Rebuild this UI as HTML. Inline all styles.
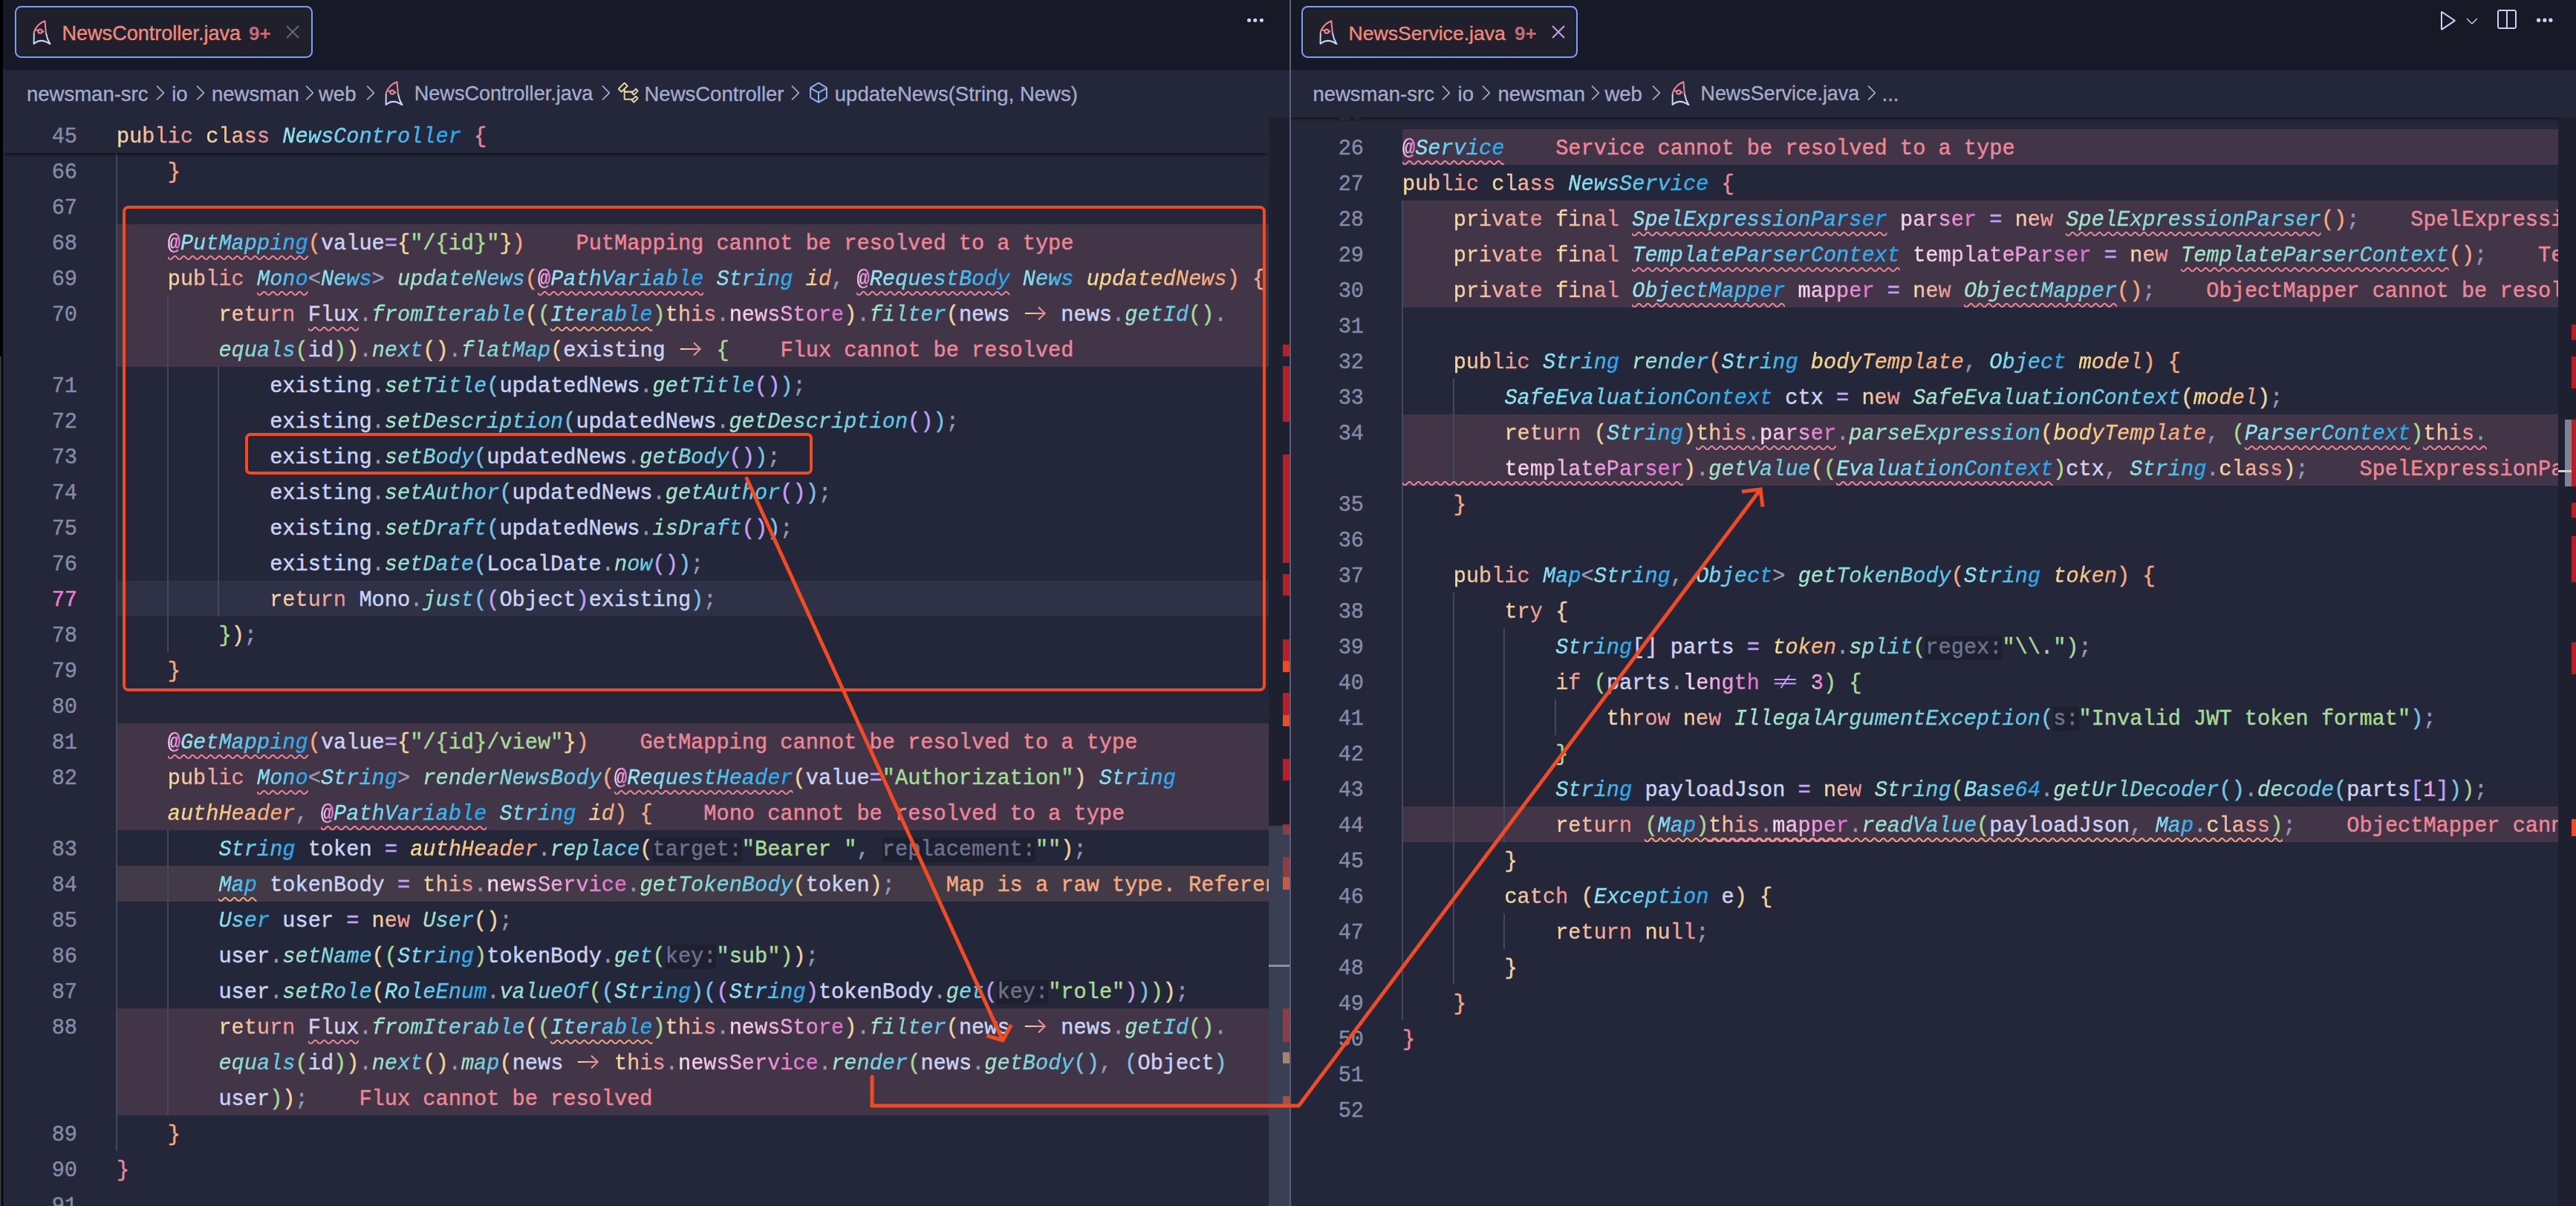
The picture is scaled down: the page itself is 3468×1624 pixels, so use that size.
<!DOCTYPE html><html><head><meta charset="utf-8"><style>
*{margin:0;padding:0;box-sizing:border-box}
html,body{width:3468px;height:1624px;overflow:hidden;background:#181926}
body{position:relative;font-family:"Liberation Sans",sans-serif}
.abs{position:absolute}
.pane{position:absolute;overflow:hidden;background:#24273a}
.hl{position:absolute;height:48px}
.err{background:#423548}
.warn{background:#433a47}
.cur{background:#2f3246}
.guide{position:absolute;width:2px;background:#434760}
.ln{position:absolute;height:48px;padding-top:3px;text-align:right;font:28.63px "Liberation Mono",monospace;line-height:48px;color:#868ca6;white-space:pre;-webkit-text-stroke:0.4px currentColor}
.ln.act{color:#f07fd8}
.row{position:absolute;height:48px;padding-top:3px;font:28.63px "Liberation Mono",monospace;line-height:48px;color:#cad3f5;white-space:pre;-webkit-text-stroke:0.45px currentColor}
.row span{}
.k{background:linear-gradient(90deg,#f6dca2,#ee8a90);-webkit-background-clip:text;background-clip:text;color:transparent}
.ty{font-style:italic;background:linear-gradient(90deg,#96e8f0,#22a4ee);-webkit-background-clip:text;background-clip:text;color:transparent}
.fn{font-style:italic;background:linear-gradient(90deg,#a8e6c4,#56c2ee);-webkit-background-clip:text;background-clip:text;color:transparent}
.pa{font-style:italic;background:linear-gradient(90deg,#f6de8c,#f5a078);-webkit-background-clip:text;background-clip:text;color:transparent}
.fd{background:linear-gradient(90deg,#f8dcef,#e06ccb);-webkit-background-clip:text;background-clip:text;color:transparent}
.at{background:linear-gradient(90deg,#f8d0f0,#e070d0);-webkit-background-clip:text;background-clip:text;color:transparent}
.s{color:#a6da95}
.num{background:linear-gradient(90deg,#f8d0ec,#e870c8);-webkit-background-clip:text;background-clip:text;color:transparent}
.op{color:#c6a0f6}
.pu{color:#939ab7}
.arr{display:inline-block;width:34.36px;text-align:center;color:#f5a97f}
.neq{display:inline-block;width:34.36px;text-align:center;color:#c6a0f6}
.hint{color:#6e738d;background:#1e2030}
.me{color:#ed8796}
.mw{color:#f5a97f}
.sq{position:absolute;display:block}
.sticky{position:absolute;height:48px;background:#24273a;box-shadow:0 5px 4px -3px rgba(10,10,18,.85)}
.tabbar{position:absolute;top:0;height:94px;background:#181926}
.tab{position:absolute;top:8px;height:70px;border:2px solid #7c9ff5;border-radius:8.5px;background:#201f2c}
.tt{position:absolute;font-size:27.05px;line-height:27px;white-space:pre;-webkit-text-stroke:0.35px currentColor}
.bc{position:absolute;font-size:27.5px;line-height:27px;color:#a5adcb;white-space:pre;-webkit-text-stroke:0.3px currentColor}
</style></head><body>
<svg width="0" height="0" style="position:absolute"><defs><pattern id="sqr" patternUnits="userSpaceOnUse" width="12" height="6"><g fill="#ee8a98"><polygon points="11,0 5,6 2.2,6 8.2,0"/><polygon points="8,0 12,4 12,1.2 10.8,0"/><polygon points="0,4 2,6 4.8,6 0,1.2"/></g></pattern><pattern id="sqy" patternUnits="userSpaceOnUse" width="12" height="6"><g fill="#f5a97f"><polygon points="11,0 5,6 2.2,6 8.2,0"/><polygon points="8,0 12,4 12,1.2 10.8,0"/><polygon points="0,4 2,6 4.8,6 0,1.2"/></g></pattern></defs></svg>
<div class="abs" style="left:0;top:0;width:4px;height:1624px;background:#000"></div>
<div class="abs" style="left:0;top:480px;width:2px;height:1144px;background:#343438"></div>
<div class="tabbar" style="left:4px;width:1732px"></div>
<div class="tabbar" style="left:1738px;width:1730px"></div>
<div class="abs" style="left:4px;top:94px;width:1732px;height:64px;background:#24273a"></div>
<div class="abs" style="left:1738px;top:94px;width:1730px;height:64px;background:#24273a"></div>
<div class="tab" style="left:20px;width:401px"></div>
<svg class="abs" style="left:43.0px;top:26.0px" width="26" height="34" viewBox="-1 -1 26 34"><defs><clipPath id="jta"><rect x="-2" y="-2" width="30" height="19.3"/></clipPath><clipPath id="jba"><rect x="-2" y="17.3" width="30" height="20"/></clipPath></defs><g fill="none" stroke-width="2" stroke-linejoin="round"><g clip-path="url(#jta)" stroke="#ed8796"><path d="M16.4 1.3 C9.5 4 4 9.5 1.8 16.4 L1.6 32 C8 26.5 16 26.8 23.6 32.6 C20.5 27.5 18.8 22.5 17.9 17.5 Z"/><path d="M4.3 13.2 L7.6 14.4 M12.6 15.6 L15.4 15.6"/></g><circle cx="10" cy="15.2" r="2.6" stroke="#ed8796"/><g clip-path="url(#jba)" stroke="#cad3f5"><path d="M16.4 1.3 C9.5 4 4 9.5 1.8 16.4 L1.6 32 C8 26.5 16 26.8 23.6 32.6 C20.5 27.5 18.8 22.5 17.9 17.5 Z"/></g></g></svg>
<div class="tt" style="left:83.5px;top:32px;color:#f08a7c">NewsController.java</div>
<div class="tt" style="left:335px;top:32px;color:#c46e72;font-weight:bold;font-size:26px;-webkit-text-stroke:0">9+</div>
<svg class="abs" style="left:377.70px;top:27.40px" width="32.00" height="32.00" viewBox="0 0 16 16"><path d="M8 8.707l3.646 3.647.708-.707L8.707 8l3.647-3.646-.707-.708L8 7.293 4.354 3.646l-.707.708L7.293 8l-3.646 3.646.707.708L8 8.707z" fill="#67637d" fill-rule="evenodd" clip-rule="evenodd"/></svg>
<div class="tab" style="left:1752px;width:372px"></div>
<svg class="abs" style="left:1775.0px;top:26.0px" width="26" height="34" viewBox="-1 -1 26 34"><defs><clipPath id="jtb"><rect x="-2" y="-2" width="30" height="19.3"/></clipPath><clipPath id="jbb"><rect x="-2" y="17.3" width="30" height="20"/></clipPath></defs><g fill="none" stroke-width="2" stroke-linejoin="round"><g clip-path="url(#jtb)" stroke="#ed8796"><path d="M16.4 1.3 C9.5 4 4 9.5 1.8 16.4 L1.6 32 C8 26.5 16 26.8 23.6 32.6 C20.5 27.5 18.8 22.5 17.9 17.5 Z"/><path d="M4.3 13.2 L7.6 14.4 M12.6 15.6 L15.4 15.6"/></g><circle cx="10" cy="15.2" r="2.6" stroke="#ed8796"/><g clip-path="url(#jbb)" stroke="#cad3f5"><path d="M16.4 1.3 C9.5 4 4 9.5 1.8 16.4 L1.6 32 C8 26.5 16 26.8 23.6 32.6 C20.5 27.5 18.8 22.5 17.9 17.5 Z"/></g></g></svg>
<div class="tt" style="left:1815.5px;top:32px;color:#f08a7c;font-size:26.6px">NewsService.java</div>
<div class="tt" style="left:2039px;top:32px;color:#c46e72;font-weight:bold;font-size:26px;-webkit-text-stroke:0">9+</div>
<svg class="abs" style="left:2081.70px;top:26.50px" width="32.00" height="32.00" viewBox="0 0 16 16"><path d="M8 8.707l3.646 3.647.708-.707L8.707 8l3.647-3.646-.707-.708L8 7.293 4.354 3.646l-.707.708L7.293 8l-3.646 3.646.707.708L8 8.707z" fill="#c6a0f6" fill-rule="evenodd" clip-rule="evenodd"/></svg>
<svg class="abs" style="left:1670px;top:17px" width="40" height="20"><circle cx="11.6" cy="10.3" r="2.55" fill="#cad3f5"/><circle cx="19.8" cy="10.3" r="2.55" fill="#cad3f5"/><circle cx="28.4" cy="10.3" r="2.55" fill="#cad3f5"/></svg>
<svg class="abs" style="left:3406px;top:17px" width="40" height="20"><circle cx="11.6" cy="10.2" r="2.6" fill="#cad3f5"/><circle cx="19.9" cy="10.2" r="2.6" fill="#cad3f5"/><circle cx="27.9" cy="10.2" r="2.6" fill="#cad3f5"/></svg>
<svg class="abs" style="left:3279.60px;top:11.00px" width="32.00" height="32.00" viewBox="0 0 16 16"><path d="M3.78 2L3 2.41v12l.78.42 9-6V8l-9-6zM4 13.48V3.35l7.6 5.07L4 13.48z" fill="#cad3f5" fill-rule="evenodd" clip-rule="evenodd"/></svg>
<svg class="abs" style="left:3315.50px;top:15.90px" width="24.00" height="24.00" viewBox="0 0 16 16"><path d="M7.976 10.072l4.357-4.357.62.618L8.284 11h-.618L3 6.333l.619-.618 4.357 4.357z" fill="#cad3f5" fill-rule="evenodd" clip-rule="evenodd"/></svg>
<svg class="abs" style="left:3358.00px;top:11.00px" width="32.00" height="32.00" viewBox="0 0 16 16"><path d="M14 1H3L2 2v11l1 1h11l1-1V2l-1-1zM8 13H3V2h5v11zm6 0H9V2h5v11z" fill="#cad3f5" fill-rule="evenodd" clip-rule="evenodd"/></svg>
<div class="bc" style="left:36.0px;top:112.5px">newsman-src</div>
<svg class="abs" style="left:199.07px;top:109.21px" width="32.00" height="32.00" viewBox="0 0 16 16"><path d="M10.072 8.024L5.715 3.667l.618-.62L11 7.716v.618L6.333 13l-.618-.619 4.357-4.357z" fill="#a5adcb" fill-rule="evenodd" clip-rule="evenodd"/></svg>
<div class="bc" style="left:231.2px;top:112.5px">io</div>
<svg class="abs" style="left:252.57px;top:109.21px" width="32.00" height="32.00" viewBox="0 0 16 16"><path d="M10.072 8.024L5.715 3.667l.618-.62L11 7.716v.618L6.333 13l-.618-.619 4.357-4.357z" fill="#a5adcb" fill-rule="evenodd" clip-rule="evenodd"/></svg>
<div class="bc" style="left:285.0px;top:112.5px">newsman</div>
<svg class="abs" style="left:399.57px;top:109.21px" width="32.00" height="32.00" viewBox="0 0 16 16"><path d="M10.072 8.024L5.715 3.667l.618-.62L11 7.716v.618L6.333 13l-.618-.619 4.357-4.357z" fill="#a5adcb" fill-rule="evenodd" clip-rule="evenodd"/></svg>
<div class="bc" style="left:429.0px;top:112.5px">web</div>
<svg class="abs" style="left:481.57px;top:109.21px" width="32.00" height="32.00" viewBox="0 0 16 16"><path d="M10.072 8.024L5.715 3.667l.618-.62L11 7.716v.618L6.333 13l-.618-.619 4.357-4.357z" fill="#a5adcb" fill-rule="evenodd" clip-rule="evenodd"/></svg>
<div class="bc" style="left:1767.4px;top:112.5px">newsman-src</div>
<svg class="abs" style="left:1930.47px;top:109.21px" width="32.00" height="32.00" viewBox="0 0 16 16"><path d="M10.072 8.024L5.715 3.667l.618-.62L11 7.716v.618L6.333 13l-.618-.619 4.357-4.357z" fill="#a5adcb" fill-rule="evenodd" clip-rule="evenodd"/></svg>
<div class="bc" style="left:1962.6px;top:112.5px">io</div>
<svg class="abs" style="left:1983.97px;top:109.21px" width="32.00" height="32.00" viewBox="0 0 16 16"><path d="M10.072 8.024L5.715 3.667l.618-.62L11 7.716v.618L6.333 13l-.618-.619 4.357-4.357z" fill="#a5adcb" fill-rule="evenodd" clip-rule="evenodd"/></svg>
<div class="bc" style="left:2016.4px;top:112.5px">newsman</div>
<svg class="abs" style="left:2130.97px;top:109.21px" width="32.00" height="32.00" viewBox="0 0 16 16"><path d="M10.072 8.024L5.715 3.667l.618-.62L11 7.716v.618L6.333 13l-.618-.619 4.357-4.357z" fill="#a5adcb" fill-rule="evenodd" clip-rule="evenodd"/></svg>
<div class="bc" style="left:2160.4px;top:112.5px">web</div>
<svg class="abs" style="left:2212.97px;top:109.21px" width="32.00" height="32.00" viewBox="0 0 16 16"><path d="M10.072 8.024L5.715 3.667l.618-.62L11 7.716v.618L6.333 13l-.618-.619 4.357-4.357z" fill="#a5adcb" fill-rule="evenodd" clip-rule="evenodd"/></svg>
<svg class="abs" style="left:516.6px;top:108.0px" width="26" height="34" viewBox="-1 -1 26 34"><defs><clipPath id="jtc"><rect x="-2" y="-2" width="30" height="19.3"/></clipPath><clipPath id="jbc"><rect x="-2" y="17.3" width="30" height="20"/></clipPath></defs><g fill="none" stroke-width="2" stroke-linejoin="round"><g clip-path="url(#jtc)" stroke="#ed8796"><path d="M16.4 1.3 C9.5 4 4 9.5 1.8 16.4 L1.6 32 C8 26.5 16 26.8 23.6 32.6 C20.5 27.5 18.8 22.5 17.9 17.5 Z"/><path d="M4.3 13.2 L7.6 14.4 M12.6 15.6 L15.4 15.6"/></g><circle cx="10" cy="15.2" r="2.6" stroke="#ed8796"/><g clip-path="url(#jbc)" stroke="#cad3f5"><path d="M16.4 1.3 C9.5 4 4 9.5 1.8 16.4 L1.6 32 C8 26.5 16 26.8 23.6 32.6 C20.5 27.5 18.8 22.5 17.9 17.5 Z"/></g></g></svg>
<div class="bc" style="left:557.8px;top:112.5px;font-size:27.05px">NewsController.java</div>
<svg class="abs" style="left:798.57px;top:109.21px" width="32.00" height="32.00" viewBox="0 0 16 16"><path d="M10.072 8.024L5.715 3.667l.618-.62L11 7.716v.618L6.333 13l-.618-.619 4.357-4.357z" fill="#a5adcb" fill-rule="evenodd" clip-rule="evenodd"/></svg>
<svg class="abs" style="left:830.30px;top:109.40px" width="32.00" height="32.00" viewBox="0 0 16 16"><path d="M11.34 9.71h.71l2.67-2.67v-.71L13.38 5h-.7l-1.82 1.81h-5V5.56l1.86-1.85V3l-2-2H5L1 5v.71l2 2h.71l1.14-1.15v5.79l.5.5H10v.52l1.33 1.34h.71l2.67-2.67v-.71L13.37 10h-.7l-1.86 1.85h-5v-4H10v.48l1.34 1.38zm1.69-3.65l.63.63-2 2-.63-.63 2-2zm0 5l.63.63-2 2-.63-.63 2-2zM3.35 6.65L2.06 5.36l3.29-3.3 1.3 1.3-3.3 3.29z" fill="#eed49f" fill-rule="evenodd" clip-rule="evenodd"/></svg>
<div class="bc" style="left:867.5px;top:112.5px">NewsController</div>
<svg class="abs" style="left:1054.07px;top:109.21px" width="32.00" height="32.00" viewBox="0 0 16 16"><path d="M10.072 8.024L5.715 3.667l.618-.62L11 7.716v.618L6.333 13l-.618-.619 4.357-4.357z" fill="#a5adcb" fill-rule="evenodd" clip-rule="evenodd"/></svg>
<svg class="abs" style="left:1086.40px;top:108.80px" width="32.00" height="32.00" viewBox="0 0 16 16"><path d="M13.51 4l-5-3h-1l-5 3-.49.86v6l.49.85 5 3h1l5-3 .49-.85v-6L13.51 4zm-6 9.56l-4.5-2.7V5.7l4.5 2.45v5.41zM3.27 4.7l4.74-2.84 4.74 2.84-4.74 2.59L3.27 4.7zM13 10.86l-4.5 2.7V8.15L13 5.7v5.16z" fill="#8aadf4" fill-rule="evenodd" clip-rule="evenodd"/></svg>
<div class="bc" style="left:1123.8px;top:112.5px">updateNews(String, News)</div>
<svg class="abs" style="left:2249.0px;top:108.0px" width="26" height="34" viewBox="-1 -1 26 34"><defs><clipPath id="jtd"><rect x="-2" y="-2" width="30" height="19.3"/></clipPath><clipPath id="jbd"><rect x="-2" y="17.3" width="30" height="20"/></clipPath></defs><g fill="none" stroke-width="2" stroke-linejoin="round"><g clip-path="url(#jtd)" stroke="#ed8796"><path d="M16.4 1.3 C9.5 4 4 9.5 1.8 16.4 L1.6 32 C8 26.5 16 26.8 23.6 32.6 C20.5 27.5 18.8 22.5 17.9 17.5 Z"/><path d="M4.3 13.2 L7.6 14.4 M12.6 15.6 L15.4 15.6"/></g><circle cx="10" cy="15.2" r="2.6" stroke="#ed8796"/><g clip-path="url(#jbd)" stroke="#cad3f5"><path d="M16.4 1.3 C9.5 4 4 9.5 1.8 16.4 L1.6 32 C8 26.5 16 26.8 23.6 32.6 C20.5 27.5 18.8 22.5 17.9 17.5 Z"/></g></g></svg>
<div class="bc" style="left:2289.5px;top:112.5px;font-size:26.9px">NewsService.java</div>
<svg class="abs" style="left:2502.57px;top:109.21px" width="32.00" height="32.00" viewBox="0 0 16 16"><path d="M10.072 8.024L5.715 3.667l.618-.62L11 7.716v.618L6.333 13l-.618-.619 4.357-4.357z" fill="#a5adcb" fill-rule="evenodd" clip-rule="evenodd"/></svg>
<div class="bc" style="left:2533.5px;top:112.5px">...</div>
<div class="pane" style="left:4px;top:158px;width:1704px;height:1466px">
<div class="hl err" style="left:153.00px;top:144.00px;width:1551.00px"></div>
<div class="hl err" style="left:153.00px;top:192.00px;width:1551.00px"></div>
<div class="hl err" style="left:153.00px;top:240.00px;width:1551.00px"></div>
<div class="hl err" style="left:153.00px;top:288.00px;width:1551.00px"></div>
<div class="hl cur" style="left:153.00px;top:624.00px;width:1551.00px"></div>
<div class="hl err" style="left:153.00px;top:816.00px;width:1551.00px"></div>
<div class="hl err" style="left:153.00px;top:864.00px;width:1551.00px"></div>
<div class="hl err" style="left:153.00px;top:912.00px;width:1551.00px"></div>
<div class="hl warn" style="left:153.00px;top:1008.00px;width:1551.00px"></div>
<div class="hl err" style="left:153.00px;top:1200.00px;width:1551.00px"></div>
<div class="hl err" style="left:153.00px;top:1248.00px;width:1551.00px"></div>
<div class="hl err" style="left:153.00px;top:1296.00px;width:1551.00px"></div>
<div class="guide" style="left:152.00px;top:48.00px;height:1344px"></div>
<div class="guide" style="left:220.72px;top:240.00px;height:480px"></div>
<div class="guide" style="left:289.44px;top:336.00px;height:336px"></div>
<div class="guide" style="left:220.72px;top:960.00px;height:384px"></div>
<div class="ln" style="left:0;width:100.00px;top:48.00px">66</div>
<div class="row" style="left:153.00px;top:48.00px">    <span style="color:#f5a97f">}</span></div>
<div class="ln" style="left:0;width:100.00px;top:96.00px">67</div>
<div class="row" style="left:153.00px;top:96.00px"></div>
<div class="ln" style="left:0;width:100.00px;top:144.00px">68</div>
<div class="row" style="left:153.00px;top:144.00px">    <span class="at">@</span><span class="ty">PutMapping</span><span style="color:#f5a97f">(</span>value<span class="op">=</span><span style="color:#eed49f">{</span><span class="s">"/{id}"</span><span style="color:#eed49f">}</span><span style="color:#f5a97f">)</span>    <span class="me">PutMapping cannot be resolved to a type</span></div>
<div class="ln" style="left:0;width:100.00px;top:192.00px">69</div>
<div class="row" style="left:153.00px;top:192.00px">    <span class="k">public</span> <span class="ty">Mono</span><span class="pu">&lt;</span><span class="ty">News</span><span class="pu">&gt;</span> <span class="fn">updateNews</span><span style="color:#f5a97f">(</span><span class="at">@</span><span class="ty">PathVariable</span> <span class="ty">String</span> <span class="pa">id</span><span class="pu">,</span> <span class="at">@</span><span class="ty">RequestBody</span> <span class="ty">News</span> <span class="pa">updatedNews</span><span style="color:#f5a97f">)</span> <span style="color:#f5a97f">{</span></div>
<div class="ln" style="left:0;width:100.00px;top:240.00px">70</div>
<div class="row" style="left:153.00px;top:240.00px">        <span class="k">return</span> Flux<span class="pu">.</span><span class="fn">fromIterable</span><span style="color:#eed49f">(</span><span style="color:#a6da95">(</span><span class="ty">Iterable</span><span style="color:#a6da95">)</span><span class="k">this</span><span class="pu">.</span><span class="fd">newsStore</span><span style="color:#eed49f">)</span><span class="pu">.</span><span class="fn">filter</span><span style="color:#eed49f">(</span>news    news<span class="pu">.</span><span class="fn">getId</span><span style="color:#a6da95">(</span><span style="color:#a6da95">)</span><span class="pu">.</span></div>
<svg class="sq" style="left:1372.78px;top:254.00px" width="35" height="20"><defs><linearGradient id="ag5_71"><stop offset="0" stop-color="#f6dca2"/><stop offset="1" stop-color="#ee8a90"/></linearGradient></defs><path d="M2.9 10 H29.8 M21 1.5 L29.8 10 L21 18.5" fill="none" stroke="url(#ag5_71)" stroke-width="1.9"/></svg>
<div class="row" style="left:153.00px;top:288.00px">        <span class="fn">equals</span><span style="color:#a6da95">(</span>id<span style="color:#a6da95">)</span><span style="color:#eed49f">)</span><span class="pu">.</span><span class="fn">next</span><span style="color:#eed49f">(</span><span style="color:#eed49f">)</span><span class="pu">.</span><span class="fn">flatMap</span><span style="color:#eed49f">(</span>existing    <span style="color:#a6da95">{</span>    <span class="me">Flux cannot be resolved</span></div>
<svg class="sq" style="left:908.92px;top:302.00px" width="35" height="20"><defs><linearGradient id="ag6_44"><stop offset="0" stop-color="#f6dca2"/><stop offset="1" stop-color="#ee8a90"/></linearGradient></defs><path d="M2.9 10 H29.8 M21 1.5 L29.8 10 L21 18.5" fill="none" stroke="url(#ag6_44)" stroke-width="1.9"/></svg>
<div class="ln" style="left:0;width:100.00px;top:336.00px">71</div>
<div class="row" style="left:153.00px;top:336.00px">            existing<span class="pu">.</span><span class="fn">setTitle</span><span style="color:#7dc4e4">(</span>updatedNews<span class="pu">.</span><span class="fn">getTitle</span><span style="color:#c6a0f6">(</span><span style="color:#c6a0f6">)</span><span style="color:#7dc4e4">)</span><span class="pu">;</span></div>
<div class="ln" style="left:0;width:100.00px;top:384.00px">72</div>
<div class="row" style="left:153.00px;top:384.00px">            existing<span class="pu">.</span><span class="fn">setDescription</span><span style="color:#7dc4e4">(</span>updatedNews<span class="pu">.</span><span class="fn">getDescription</span><span style="color:#c6a0f6">(</span><span style="color:#c6a0f6">)</span><span style="color:#7dc4e4">)</span><span class="pu">;</span></div>
<div class="ln" style="left:0;width:100.00px;top:432.00px">73</div>
<div class="row" style="left:153.00px;top:432.00px">            existing<span class="pu">.</span><span class="fn">setBody</span><span style="color:#7dc4e4">(</span>updatedNews<span class="pu">.</span><span class="fn">getBody</span><span style="color:#c6a0f6">(</span><span style="color:#c6a0f6">)</span><span style="color:#7dc4e4">)</span><span class="pu">;</span></div>
<div class="ln" style="left:0;width:100.00px;top:480.00px">74</div>
<div class="row" style="left:153.00px;top:480.00px">            existing<span class="pu">.</span><span class="fn">setAuthor</span><span style="color:#7dc4e4">(</span>updatedNews<span class="pu">.</span><span class="fn">getAuthor</span><span style="color:#c6a0f6">(</span><span style="color:#c6a0f6">)</span><span style="color:#7dc4e4">)</span><span class="pu">;</span></div>
<div class="ln" style="left:0;width:100.00px;top:528.00px">75</div>
<div class="row" style="left:153.00px;top:528.00px">            existing<span class="pu">.</span><span class="fn">setDraft</span><span style="color:#7dc4e4">(</span>updatedNews<span class="pu">.</span><span class="fn">isDraft</span><span style="color:#c6a0f6">(</span><span style="color:#c6a0f6">)</span><span style="color:#7dc4e4">)</span><span class="pu">;</span></div>
<div class="ln" style="left:0;width:100.00px;top:576.00px">76</div>
<div class="row" style="left:153.00px;top:576.00px">            existing<span class="pu">.</span><span class="fn">setDate</span><span style="color:#7dc4e4">(</span>LocalDate<span class="pu">.</span><span class="fn">now</span><span style="color:#c6a0f6">(</span><span style="color:#c6a0f6">)</span><span style="color:#7dc4e4">)</span><span class="pu">;</span></div>
<div class="ln act" style="left:0;width:100.00px;top:624.00px">77</div>
<div class="row" style="left:153.00px;top:624.00px">            <span class="k">return</span> Mono<span class="pu">.</span><span class="fn">just</span><span style="color:#7dc4e4">(</span><span style="color:#c6a0f6">(</span>Object<span style="color:#c6a0f6">)</span>existing<span style="color:#7dc4e4">)</span><span class="pu">;</span></div>
<div class="ln" style="left:0;width:100.00px;top:672.00px">78</div>
<div class="row" style="left:153.00px;top:672.00px">        <span style="color:#a6da95">}</span><span style="color:#eed49f">)</span><span class="pu">;</span></div>
<div class="ln" style="left:0;width:100.00px;top:720.00px">79</div>
<div class="row" style="left:153.00px;top:720.00px">    <span style="color:#f5a97f">}</span></div>
<div class="ln" style="left:0;width:100.00px;top:768.00px">80</div>
<div class="row" style="left:153.00px;top:768.00px"></div>
<div class="ln" style="left:0;width:100.00px;top:816.00px">81</div>
<div class="row" style="left:153.00px;top:816.00px">    <span class="at">@</span><span class="ty">GetMapping</span><span style="color:#f5a97f">(</span>value<span class="op">=</span><span style="color:#eed49f">{</span><span class="s">"/{id}/view"</span><span style="color:#eed49f">}</span><span style="color:#f5a97f">)</span>    <span class="me">GetMapping cannot be resolved to a type</span></div>
<div class="ln" style="left:0;width:100.00px;top:864.00px">82</div>
<div class="row" style="left:153.00px;top:864.00px">    <span class="k">public</span> <span class="ty">Mono</span><span class="pu">&lt;</span><span class="ty">String</span><span class="pu">&gt;</span> <span class="fn">renderNewsBody</span><span style="color:#f5a97f">(</span><span class="at">@</span><span class="ty">RequestHeader</span><span style="color:#eed49f">(</span>value<span class="op">=</span><span class="s">"Authorization"</span><span style="color:#eed49f">)</span> <span class="ty">String</span></div>
<div class="row" style="left:153.00px;top:912.00px">    <span class="pa">authHeader</span><span class="pu">,</span> <span class="at">@</span><span class="ty">PathVariable</span> <span class="ty">String</span> <span class="pa">id</span><span style="color:#f5a97f">)</span> <span style="color:#f5a97f">{</span>    <span class="me">Mono cannot be resolved to a type</span></div>
<div class="ln" style="left:0;width:100.00px;top:960.00px">83</div>
<div class="row" style="left:153.00px;top:960.00px">        <span class="ty">String</span> token <span class="op">=</span> <span class="pa">authHeader</span><span class="pu">.</span><span class="fn">replace</span><span style="color:#eed49f">(</span><span class="hint">target:</span><span class="s">"Bearer "</span><span class="pu">,</span> <span class="hint">replacement:</span><span class="s">""</span><span style="color:#eed49f">)</span><span class="pu">;</span></div>
<div class="ln" style="left:0;width:100.00px;top:1008.00px">84</div>
<div class="row" style="left:153.00px;top:1008.00px">        <span class="ty">Map</span> tokenBody <span class="op">=</span> <span class="k">this</span><span class="pu">.</span><span class="fd">newsService</span><span class="pu">.</span><span class="fn">getTokenBody</span><span style="color:#eed49f">(</span>token<span style="color:#eed49f">)</span><span class="pu">;</span>    <span class="mw">Map is a raw type. References to generic type Map&lt;K,V&gt; should be parameterized</span></div>
<div class="ln" style="left:0;width:100.00px;top:1056.00px">85</div>
<div class="row" style="left:153.00px;top:1056.00px">        <span class="ty">User</span> user <span class="op">=</span> <span class="k">new</span> <span class="fn">User</span><span style="color:#eed49f">(</span><span style="color:#eed49f">)</span><span class="pu">;</span></div>
<div class="ln" style="left:0;width:100.00px;top:1104.00px">86</div>
<div class="row" style="left:153.00px;top:1104.00px">        user<span class="pu">.</span><span class="fn">setName</span><span style="color:#eed49f">(</span><span style="color:#a6da95">(</span><span class="ty">String</span><span style="color:#a6da95">)</span>tokenBody<span class="pu">.</span><span class="fn">get</span><span style="color:#a6da95">(</span><span class="hint">key:</span><span class="s">"sub"</span><span style="color:#a6da95">)</span><span style="color:#eed49f">)</span><span class="pu">;</span></div>
<div class="ln" style="left:0;width:100.00px;top:1152.00px">87</div>
<div class="row" style="left:153.00px;top:1152.00px">        user<span class="pu">.</span><span class="fn">setRole</span><span style="color:#eed49f">(</span><span class="ty">RoleEnum</span><span class="pu">.</span><span class="fn">valueOf</span><span style="color:#a6da95">(</span><span style="color:#7dc4e4">(</span><span class="ty">String</span><span style="color:#7dc4e4">)</span><span style="color:#7dc4e4">(</span><span style="color:#c6a0f6">(</span><span class="ty">String</span><span style="color:#c6a0f6">)</span>tokenBody<span class="pu">.</span><span class="fn">get</span><span style="color:#c6a0f6">(</span><span class="hint">key:</span><span class="s">"role"</span><span style="color:#c6a0f6">)</span><span style="color:#7dc4e4">)</span><span style="color:#a6da95">)</span><span style="color:#eed49f">)</span><span class="pu">;</span></div>
<div class="ln" style="left:0;width:100.00px;top:1200.00px">88</div>
<div class="row" style="left:153.00px;top:1200.00px">        <span class="k">return</span> Flux<span class="pu">.</span><span class="fn">fromIterable</span><span style="color:#eed49f">(</span><span style="color:#a6da95">(</span><span class="ty">Iterable</span><span style="color:#a6da95">)</span><span class="k">this</span><span class="pu">.</span><span class="fd">newsStore</span><span style="color:#eed49f">)</span><span class="pu">.</span><span class="fn">filter</span><span style="color:#eed49f">(</span>news    news<span class="pu">.</span><span class="fn">getId</span><span style="color:#a6da95">(</span><span style="color:#a6da95">)</span><span class="pu">.</span></div>
<svg class="sq" style="left:1372.78px;top:1214.00px" width="35" height="20"><defs><linearGradient id="ag25_71"><stop offset="0" stop-color="#f6dca2"/><stop offset="1" stop-color="#ee8a90"/></linearGradient></defs><path d="M2.9 10 H29.8 M21 1.5 L29.8 10 L21 18.5" fill="none" stroke="url(#ag25_71)" stroke-width="1.9"/></svg>
<div class="row" style="left:153.00px;top:1248.00px">        <span class="fn">equals</span><span style="color:#a6da95">(</span>id<span style="color:#a6da95">)</span><span style="color:#eed49f">)</span><span class="pu">.</span><span class="fn">next</span><span style="color:#eed49f">(</span><span style="color:#eed49f">)</span><span class="pu">.</span><span class="fn">map</span><span style="color:#eed49f">(</span>news    <span class="k">this</span><span class="pu">.</span><span class="fd">newsService</span><span class="pu">.</span><span class="fn">render</span><span style="color:#a6da95">(</span>news<span class="pu">.</span><span class="fn">getBody</span><span style="color:#7dc4e4">(</span><span style="color:#7dc4e4">)</span><span class="pu">,</span> <span style="color:#7dc4e4">(</span>Object<span style="color:#7dc4e4">)</span></div>
<svg class="sq" style="left:771.48px;top:1262.00px" width="35" height="20"><defs><linearGradient id="ag26_36"><stop offset="0" stop-color="#f6dca2"/><stop offset="1" stop-color="#ee8a90"/></linearGradient></defs><path d="M2.9 10 H29.8 M21 1.5 L29.8 10 L21 18.5" fill="none" stroke="url(#ag26_36)" stroke-width="1.9"/></svg>
<div class="row" style="left:153.00px;top:1296.00px">        user<span style="color:#a6da95">)</span><span style="color:#eed49f">)</span><span class="pu">;</span>    <span class="me">Flux cannot be resolved</span></div>
<div class="ln" style="left:0;width:100.00px;top:1344.00px">89</div>
<div class="row" style="left:153.00px;top:1344.00px">    <span style="color:#f5a97f">}</span></div>
<div class="ln" style="left:0;width:100.00px;top:1392.00px">90</div>
<div class="row" style="left:153.00px;top:1392.00px"><span style="color:#ed8796">}</span></div>
<div class="ln" style="left:0;width:100.00px;top:1440.00px">91</div>
<div class="row" style="left:153.00px;top:1440.00px"></div>
<svg class="sq" style="left:221.72px;top:186.00px" width="188.98" height="6"><rect width="100%" height="6" fill="url(#sqr)"/></svg>
<svg class="sq" style="left:341.98px;top:234.00px" width="68.72" height="6"><rect width="100%" height="6" fill="url(#sqr)"/></svg>
<svg class="sq" style="left:719.94px;top:234.00px" width="223.34" height="6"><rect width="100%" height="6" fill="url(#sqr)"/></svg>
<svg class="sq" style="left:1149.44px;top:234.00px" width="206.16" height="6"><rect width="100%" height="6" fill="url(#sqr)"/></svg>
<svg class="sq" style="left:410.70px;top:282.00px" width="68.72" height="6"><rect width="100%" height="6" fill="url(#sqr)"/></svg>
<svg class="sq" style="left:737.12px;top:282.00px" width="137.44" height="6"><rect width="100%" height="6" fill="url(#sqy)"/></svg>
<svg class="sq" style="left:221.72px;top:858.00px" width="188.98" height="6"><rect width="100%" height="6" fill="url(#sqr)"/></svg>
<svg class="sq" style="left:341.98px;top:906.00px" width="68.72" height="6"><rect width="100%" height="6" fill="url(#sqr)"/></svg>
<svg class="sq" style="left:823.02px;top:906.00px" width="240.52" height="6"><rect width="100%" height="6" fill="url(#sqr)"/></svg>
<svg class="sq" style="left:427.88px;top:954.00px" width="223.34" height="6"><rect width="100%" height="6" fill="url(#sqr)"/></svg>
<svg class="sq" style="left:290.44px;top:1050.00px" width="51.54" height="6"><rect width="100%" height="6" fill="url(#sqy)"/></svg>
<svg class="sq" style="left:410.70px;top:1242.00px" width="68.72" height="6"><rect width="100%" height="6" fill="url(#sqr)"/></svg>
<svg class="sq" style="left:737.12px;top:1242.00px" width="137.44" height="6"><rect width="100%" height="6" fill="url(#sqy)"/></svg>
<div class="sticky" style="left:0;top:0.00px;width:1704px"></div>
<div class="ln" style="left:0;width:100.00px;top:0.00px">45</div>
<div class="row" style="left:153.00px;top:0.00px"><span class="k">public</span> <span class="k">class</span> <span class="ty">NewsController</span> <span style="color:#ed8796">{</span></div>
</div>
<div class="pane" style="left:1738px;top:158px;width:1706px;height:1466px">
<div class="hl err" style="left:150.00px;top:16.00px;width:1556.00px"></div>
<div class="hl err" style="left:150.00px;top:112.00px;width:1556.00px"></div>
<div class="hl err" style="left:150.00px;top:160.00px;width:1556.00px"></div>
<div class="hl err" style="left:150.00px;top:208.00px;width:1556.00px"></div>
<div class="hl err" style="left:150.00px;top:400.00px;width:1556.00px"></div>
<div class="hl err" style="left:150.00px;top:448.00px;width:1556.00px"></div>
<div class="hl err" style="left:150.00px;top:928.00px;width:1556.00px"></div>
<div class="guide" style="left:149.00px;top:112.00px;height:1104px"></div>
<div class="guide" style="left:217.72px;top:352.00px;height:144px"></div>
<div class="guide" style="left:217.72px;top:640.00px;height:528px"></div>
<div class="guide" style="left:286.44px;top:688.00px;height:288px"></div>
<div class="guide" style="left:355.16px;top:784.00px;height:48px"></div>
<div class="guide" style="left:286.44px;top:1072.00px;height:48px"></div>
<div class="ln" style="left:0;width:98.00px;top:-32.00px">25</div>
<div class="row" style="left:150.00px;top:-32.00px"></div>
<div class="ln" style="left:0;width:98.00px;top:16.00px">26</div>
<div class="row" style="left:150.00px;top:16.00px"><span class="at">@</span><span class="ty">Service</span>    <span class="me">Service cannot be resolved to a type</span></div>
<div class="ln" style="left:0;width:98.00px;top:64.00px">27</div>
<div class="row" style="left:150.00px;top:64.00px"><span class="k">public</span> <span class="k">class</span> <span class="ty">NewsService</span> <span style="color:#ed8796">{</span></div>
<div class="ln" style="left:0;width:98.00px;top:112.00px">28</div>
<div class="row" style="left:150.00px;top:112.00px">    <span class="k">private</span> <span class="k">final</span> <span class="ty">SpelExpressionParser</span> <span class="fd">parser</span> <span class="op">=</span> <span class="k">new</span> <span class="fn">SpelExpressionParser</span><span style="color:#f5a97f">(</span><span style="color:#f5a97f">)</span><span class="pu">;</span>    <span class="me">SpelExpressionParser cannot be resolved to a type</span></div>
<div class="ln" style="left:0;width:98.00px;top:160.00px">29</div>
<div class="row" style="left:150.00px;top:160.00px">    <span class="k">private</span> <span class="k">final</span> <span class="ty">TemplateParserContext</span> <span class="fd">templateParser</span> <span class="op">=</span> <span class="k">new</span> <span class="fn">TemplateParserContext</span><span style="color:#f5a97f">(</span><span style="color:#f5a97f">)</span><span class="pu">;</span>    <span class="me">TemplateParserContext cannot be resolved to a type</span></div>
<div class="ln" style="left:0;width:98.00px;top:208.00px">30</div>
<div class="row" style="left:150.00px;top:208.00px">    <span class="k">private</span> <span class="k">final</span> <span class="ty">ObjectMapper</span> <span class="fd">mapper</span> <span class="op">=</span> <span class="k">new</span> <span class="fn">ObjectMapper</span><span style="color:#f5a97f">(</span><span style="color:#f5a97f">)</span><span class="pu">;</span>    <span class="me">ObjectMapper cannot be resolved to a type</span></div>
<div class="ln" style="left:0;width:98.00px;top:256.00px">31</div>
<div class="row" style="left:150.00px;top:256.00px"></div>
<div class="ln" style="left:0;width:98.00px;top:304.00px">32</div>
<div class="row" style="left:150.00px;top:304.00px">    <span class="k">public</span> <span class="ty">String</span> <span class="fn">render</span><span style="color:#f5a97f">(</span><span class="ty">String</span> <span class="pa">bodyTemplate</span><span class="pu">,</span> <span class="ty">Object</span> <span class="pa">model</span><span style="color:#f5a97f">)</span> <span style="color:#f5a97f">{</span></div>
<div class="ln" style="left:0;width:98.00px;top:352.00px">33</div>
<div class="row" style="left:150.00px;top:352.00px">        <span class="ty">SafeEvaluationContext</span> ctx <span class="op">=</span> <span class="k">new</span> <span class="fn">SafeEvaluationContext</span><span style="color:#eed49f">(</span><span class="pa">model</span><span style="color:#eed49f">)</span><span class="pu">;</span></div>
<div class="ln" style="left:0;width:98.00px;top:400.00px">34</div>
<div class="row" style="left:150.00px;top:400.00px">        <span class="k">return</span> <span style="color:#eed49f">(</span><span class="ty">String</span><span style="color:#eed49f">)</span><span class="k">this</span><span class="pu">.</span><span class="fd">parser</span><span class="pu">.</span><span class="fn">parseExpression</span><span style="color:#eed49f">(</span><span class="pa">bodyTemplate</span><span class="pu">,</span> <span style="color:#a6da95">(</span><span class="ty">ParserContext</span><span style="color:#a6da95">)</span><span class="k">this</span><span class="pu">.</span></div>
<div class="row" style="left:150.00px;top:448.00px">        <span class="fd">templateParser</span><span style="color:#eed49f">)</span><span class="pu">.</span><span class="fn">getValue</span><span style="color:#eed49f">(</span><span style="color:#a6da95">(</span><span class="ty">EvaluationContext</span><span style="color:#a6da95">)</span>ctx<span class="pu">,</span> <span class="ty">String</span><span class="pu">.</span><span class="k">class</span><span style="color:#eed49f">)</span><span class="pu">;</span>    <span class="me">SpelExpressionParser cannot be resolved to a type</span></div>
<div class="ln" style="left:0;width:98.00px;top:496.00px">35</div>
<div class="row" style="left:150.00px;top:496.00px">    <span style="color:#f5a97f">}</span></div>
<div class="ln" style="left:0;width:98.00px;top:544.00px">36</div>
<div class="row" style="left:150.00px;top:544.00px"></div>
<div class="ln" style="left:0;width:98.00px;top:592.00px">37</div>
<div class="row" style="left:150.00px;top:592.00px">    <span class="k">public</span> <span class="ty">Map</span><span class="pu">&lt;</span><span class="ty">String</span><span class="pu">,</span> <span class="ty">Object</span><span class="pu">&gt;</span> <span class="fn">getTokenBody</span><span style="color:#f5a97f">(</span><span class="ty">String</span> <span class="pa">token</span><span style="color:#f5a97f">)</span> <span style="color:#f5a97f">{</span></div>
<div class="ln" style="left:0;width:98.00px;top:640.00px">38</div>
<div class="row" style="left:150.00px;top:640.00px">        <span class="k">try</span> <span style="color:#eed49f">{</span></div>
<div class="ln" style="left:0;width:98.00px;top:688.00px">39</div>
<div class="row" style="left:150.00px;top:688.00px">            <span class="ty">String</span>[] parts <span class="op">=</span> <span class="pa">token</span><span class="pu">.</span><span class="fn">split</span><span style="color:#a6da95">(</span><span class="hint">regex:</span><span class="s">"\\."</span><span style="color:#a6da95">)</span><span class="pu">;</span></div>
<div class="ln" style="left:0;width:98.00px;top:736.00px">40</div>
<div class="row" style="left:150.00px;top:736.00px">            <span class="k">if</span> <span style="color:#a6da95">(</span>parts<span class="pu">.</span><span class="fd">length</span>    <span class="num">3</span><span style="color:#a6da95">)</span> <span style="color:#a6da95">{</span></div>
<svg class="sq" style="left:648.22px;top:748.00px" width="35" height="24"><path d="M2.8 9 H31.8 M2.8 14.5 H31.8 M11.5 20.5 L23.2 3" fill="none" stroke="#c6a0f6" stroke-width="1.9"/></svg>
<div class="ln" style="left:0;width:98.00px;top:784.00px">41</div>
<div class="row" style="left:150.00px;top:784.00px">                <span class="k">throw</span> <span class="k">new</span> <span class="fn">IllegalArgumentException</span><span style="color:#7dc4e4">(</span><span class="hint">s:</span><span class="s">"Invalid JWT token format"</span><span style="color:#7dc4e4">)</span><span class="pu">;</span></div>
<div class="ln" style="left:0;width:98.00px;top:832.00px">42</div>
<div class="row" style="left:150.00px;top:832.00px">            <span style="color:#a6da95">}</span></div>
<div class="ln" style="left:0;width:98.00px;top:880.00px">43</div>
<div class="row" style="left:150.00px;top:880.00px">            <span class="ty">String</span> payloadJson <span class="op">=</span> <span class="k">new</span> <span class="fn">String</span><span style="color:#a6da95">(</span><span class="ty">Base64</span><span class="pu">.</span><span class="fn">getUrlDecoder</span><span style="color:#7dc4e4">(</span><span style="color:#7dc4e4">)</span><span class="pu">.</span><span class="fn">decode</span><span style="color:#7dc4e4">(</span>parts<span style="color:#c6a0f6">[</span><span class="num">1</span><span style="color:#c6a0f6">]</span><span style="color:#7dc4e4">)</span><span style="color:#a6da95">)</span><span class="pu">;</span></div>
<div class="ln" style="left:0;width:98.00px;top:928.00px">44</div>
<div class="row" style="left:150.00px;top:928.00px">            <span class="k">return</span> <span style="color:#a6da95">(</span><span class="ty">Map</span><span style="color:#a6da95">)</span><span class="k">this</span><span class="pu">.</span><span class="fd">mapper</span><span class="pu">.</span><span class="fn">readValue</span><span style="color:#a6da95">(</span>payloadJson<span class="pu">,</span> <span class="ty">Map</span><span class="pu">.</span><span class="k">class</span><span style="color:#a6da95">)</span><span class="pu">;</span>    <span class="me">ObjectMapper cannot be resolved to a type</span></div>
<div class="ln" style="left:0;width:98.00px;top:976.00px">45</div>
<div class="row" style="left:150.00px;top:976.00px">        <span style="color:#eed49f">}</span></div>
<div class="ln" style="left:0;width:98.00px;top:1024.00px">46</div>
<div class="row" style="left:150.00px;top:1024.00px">        <span class="k">catch</span> <span style="color:#eed49f">(</span><span class="ty">Exception</span> e<span style="color:#eed49f">)</span> <span style="color:#eed49f">{</span></div>
<div class="ln" style="left:0;width:98.00px;top:1072.00px">47</div>
<div class="row" style="left:150.00px;top:1072.00px">            <span class="k">return</span> <span class="k">null</span><span class="pu">;</span></div>
<div class="ln" style="left:0;width:98.00px;top:1120.00px">48</div>
<div class="row" style="left:150.00px;top:1120.00px">        <span style="color:#eed49f">}</span></div>
<div class="ln" style="left:0;width:98.00px;top:1168.00px">49</div>
<div class="row" style="left:150.00px;top:1168.00px">    <span style="color:#f5a97f">}</span></div>
<div class="ln" style="left:0;width:98.00px;top:1216.00px">50</div>
<div class="row" style="left:150.00px;top:1216.00px"><span style="color:#ed8796">}</span></div>
<div class="ln" style="left:0;width:98.00px;top:1264.00px">51</div>
<div class="row" style="left:150.00px;top:1264.00px"></div>
<div class="ln" style="left:0;width:98.00px;top:1312.00px">52</div>
<div class="row" style="left:150.00px;top:1312.00px"></div>
<svg class="sq" style="left:150.00px;top:58.00px" width="137.44" height="6"><rect width="100%" height="6" fill="url(#sqr)"/></svg>
<svg class="sq" style="left:459.24px;top:154.00px" width="343.60" height="6"><rect width="100%" height="6" fill="url(#sqr)"/></svg>
<svg class="sq" style="left:1043.36px;top:154.00px" width="343.60" height="6"><rect width="100%" height="6" fill="url(#sqr)"/></svg>
<svg class="sq" style="left:459.24px;top:202.00px" width="360.78" height="6"><rect width="100%" height="6" fill="url(#sqr)"/></svg>
<svg class="sq" style="left:1197.98px;top:202.00px" width="360.78" height="6"><rect width="100%" height="6" fill="url(#sqr)"/></svg>
<svg class="sq" style="left:459.24px;top:250.00px" width="206.16" height="6"><rect width="100%" height="6" fill="url(#sqr)"/></svg>
<svg class="sq" style="left:905.92px;top:250.00px" width="206.16" height="6"><rect width="100%" height="6" fill="url(#sqr)"/></svg>
<svg class="sq" style="left:545.14px;top:442.00px" width="188.98" height="6"><rect width="100%" height="6" fill="url(#sqr)"/></svg>
<svg class="sq" style="left:1283.88px;top:442.00px" width="223.34" height="6"><rect width="100%" height="6" fill="url(#sqr)"/></svg>
<svg class="sq" style="left:1524.40px;top:442.00px" width="85.90" height="6"><rect width="100%" height="6" fill="url(#sqr)"/></svg>
<svg class="sq" style="left:150.00px;top:490.00px" width="377.96" height="6"><rect width="100%" height="6" fill="url(#sqr)"/></svg>
<svg class="sq" style="left:734.12px;top:490.00px" width="292.06" height="6"><rect width="100%" height="6" fill="url(#sqr)"/></svg>
<svg class="sq" style="left:476.42px;top:970.00px" width="859.00" height="6"><rect width="100%" height="6" fill="url(#sqy)"/></svg>
<svg class="sq" style="left:562.32px;top:970.00px" width="188.98" height="6"><rect width="100%" height="6" fill="url(#sqr)"/></svg>
</div>
<div class="abs" style="left:1738px;top:158px;width:1706px;height:6px;background:linear-gradient(#15161f,rgba(21,22,31,0))"></div>
<div class="abs" style="left:1708px;top:158px;width:28px;height:1466px;background:#1e2030"></div>
<div class="abs" style="left:1727px;top:464.0px;width:9px;height:16.0px;background:#b91d26"></div>
<div class="abs" style="left:1727px;top:493.0px;width:9px;height:75.0px;background:#b91d26"></div>
<div class="abs" style="left:1727px;top:612.0px;width:9px;height:146.0px;background:#b91d26"></div>
<div class="abs" style="left:1727px;top:773.0px;width:9px;height:29.0px;background:#b91d26"></div>
<div class="abs" style="left:1727px;top:861.0px;width:9px;height:28.5px;background:#b91d26"></div>
<div class="abs" style="left:1727px;top:889.5px;width:9px;height:15.0px;background:#f04a22"></div>
<div class="abs" style="left:1727px;top:933.0px;width:9px;height:30.0px;background:#b91d26"></div>
<div class="abs" style="left:1727px;top:963.0px;width:9px;height:14.7px;background:#f04a22"></div>
<div class="abs" style="left:1727px;top:1022.0px;width:9px;height:29.0px;background:#b91d26"></div>
<div class="abs" style="left:1727px;top:1110.0px;width:9px;height:2.0px;background:#b91d26"></div>
<div class="abs" style="left:1708px;top:1112px;width:28px;height:512px;background:#3a3f54"></div>
<div class="abs" style="left:1727px;top:1112.0px;width:9px;height:12.0px;background:#8e3d42"></div>
<div class="abs" style="left:1727px;top:1154.0px;width:9px;height:27.0px;background:#8e3d42"></div>
<div class="abs" style="left:1727px;top:1181.0px;width:9px;height:17.0px;background:#c85a40"></div>
<div class="abs" style="left:1727px;top:1358.0px;width:9px;height:45.0px;background:#8e3d42"></div>
<div class="abs" style="left:1727px;top:1417.0px;width:9px;height:15.0px;background:#a88468"></div>
<div class="abs" style="left:1727px;top:1476.0px;width:9px;height:11.0px;background:#a8503e"></div>
<div class="abs" style="left:1708px;top:1299px;width:28px;height:3px;background:#8a90a8"></div>
<div class="abs" style="left:1736px;top:0;width:2px;height:1624px;background:#5b6078"></div>
<div class="abs" style="left:3444px;top:158px;width:24px;height:1466px;background:#1e2030"></div>
<div class="abs" style="left:3462px;top:437.0px;width:6px;height:21.0px;background:#b91d26"></div>
<div class="abs" style="left:3462px;top:479.6px;width:6px;height:43.4px;background:#b91d26"></div>
<div class="abs" style="left:3462px;top:565.0px;width:6px;height:90.0px;background:#b91d26"></div>
<div class="abs" style="left:3462px;top:677.0px;width:6px;height:20.0px;background:#b91d26"></div>
<div class="abs" style="left:3462px;top:722.0px;width:6px;height:62.0px;background:#b91d26"></div>
<div class="abs" style="left:3462px;top:865.0px;width:6px;height:43.0px;background:#b91d26"></div>
<div class="abs" style="left:3462px;top:1103.0px;width:6px;height:22.5px;background:#f04a22"></div>
<div class="abs" style="left:3453px;top:565px;width:9px;height:90px;background:#7c8196"></div>
<div class="abs" style="left:3444px;top:633px;width:18px;height:3px;background:#d9cfc0"></div>
<svg class="abs" style="left:0;top:0" width="3468" height="1624"><g fill="none" stroke="#f24a22" stroke-width="4"><rect x="167" y="279" width="1535" height="650" rx="6"/><rect x="332" y="585" width="760" height="52" rx="5"/></g><g fill="none" stroke="#f24a22" stroke-width="5" stroke-linejoin="miter"><path d="M1004.4 642.2 L1350 1401"/><path d="M1328.4 1394.5 L1350 1401 L1361.5 1380"/><path d="M1174 1450 L1174 1489 L1748.5 1489 L2370 659" stroke-linejoin="round" stroke-linecap="round"/><path d="M2344.9 662.1 L2370 659 L2373 682.5"/></g></svg>
</body></html>
